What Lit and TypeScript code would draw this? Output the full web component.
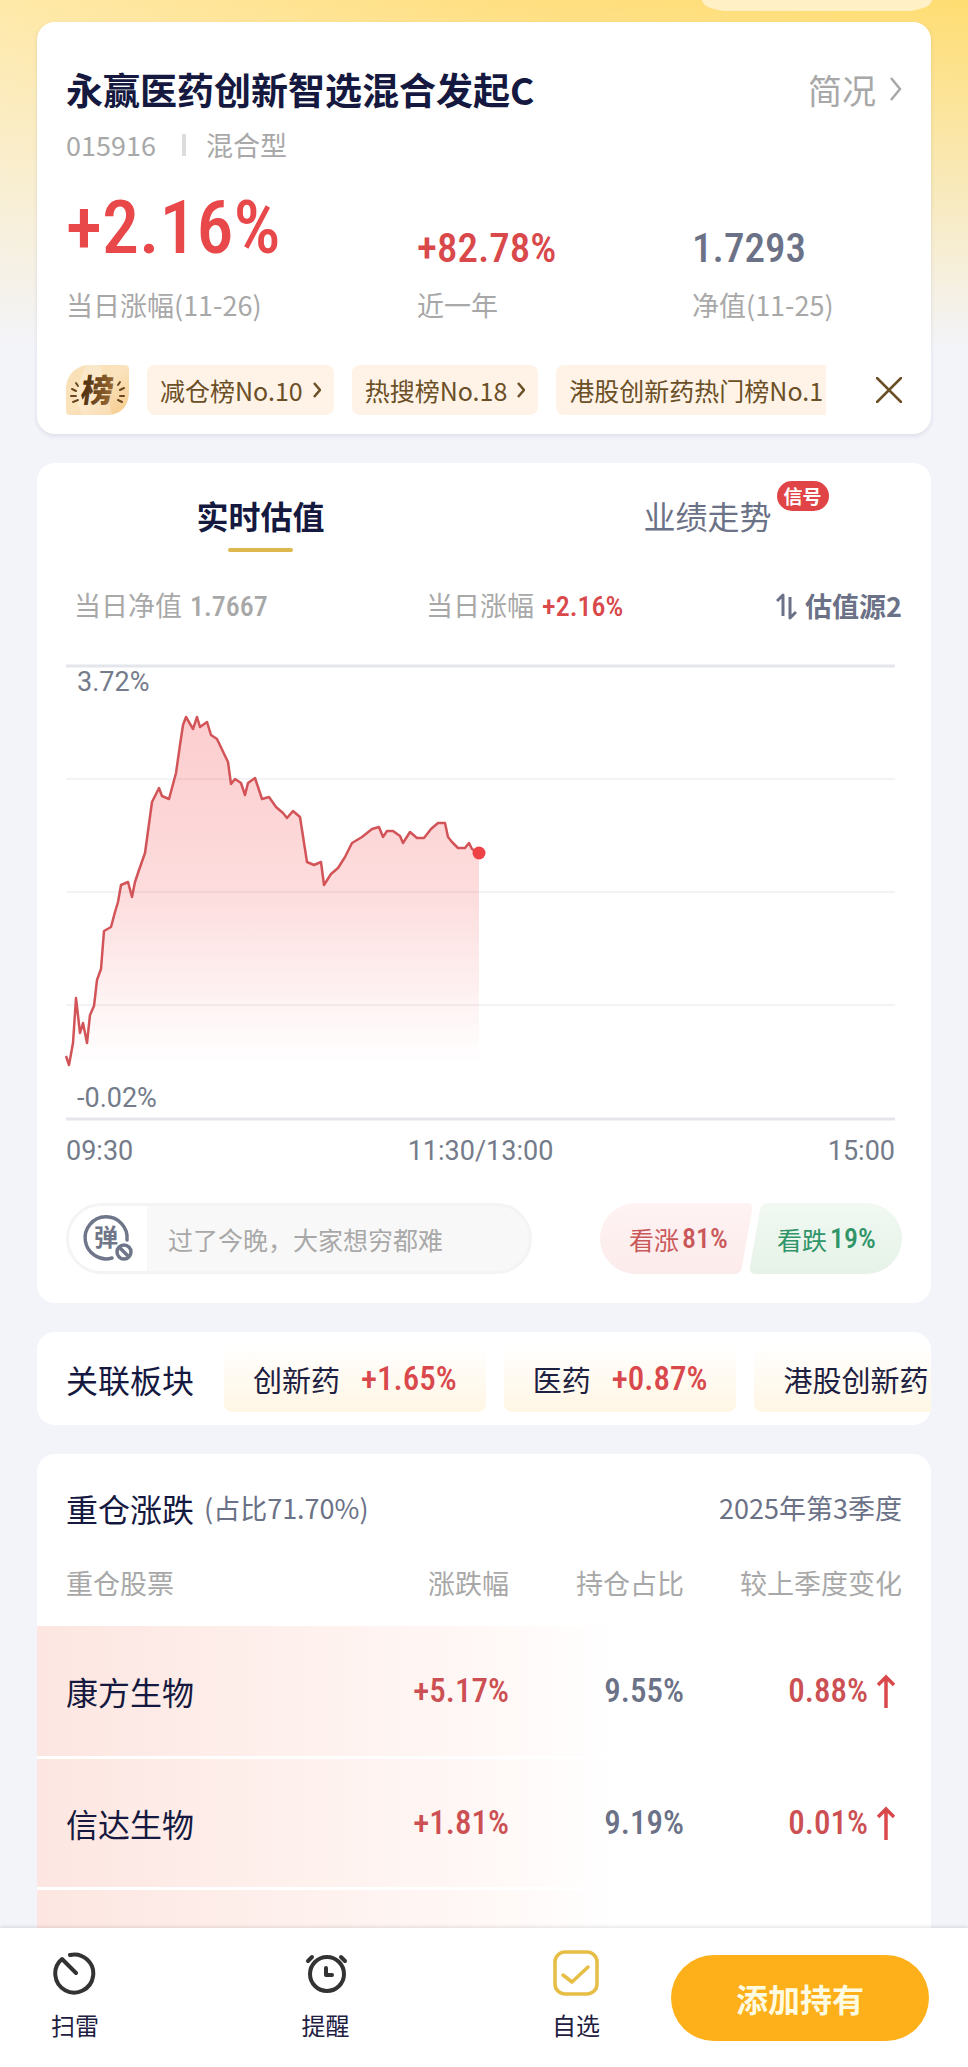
import { LitElement, html, css, svg } from "lit";
import { customElement } from "lit/decorators.js";

const LINE: [number, number][] = [
  [0, 392], [3, 401], [7, 379], [10, 334], [14, 369], [17, 359], [21, 379], [24, 351], [28, 342], [31, 316],
  [35, 305], [38, 267], [45, 263], [49, 248], [52, 238], [55, 221], [62, 218], [66, 233], [69, 218], [73, 206],
  [79, 189], [86, 138], [93, 124], [96, 132], [103, 135], [110, 109], [114, 81], [117, 61], [120, 53], [127, 65],
  [131, 53], [134, 63], [141, 58], [145, 71], [151, 75], [162, 98], [165, 120], [169, 115], [175, 119], [179, 131],
  [182, 119], [189, 114], [196, 135], [203, 133], [210, 143], [217, 149], [221, 154], [227, 147], [234, 153],
  [241, 198], [248, 201], [255, 198], [258, 221], [265, 210], [272, 204], [279, 193], [286, 179], [296, 173],
  [306, 165], [313, 163], [317, 173], [321, 167], [327, 167], [334, 172], [337, 179], [344, 168], [351, 174],
  [358, 174], [365, 165], [372, 159], [379, 159], [382, 173], [386, 178], [392, 184], [399, 184], [403, 179],
  [406, 185], [413, 189],
];

const RANKS = ["减仓榜No.10", "热搜榜No.18", "港股创新药热门榜No.1"];

const SECTORS = [
  { name: "创新药", change: "+1.65%" },
  { name: "医药", change: "+0.87%" },
  { name: "港股创新药", change: "" },
];

const HOLDINGS = [
  { name: "康方生物", change: "+5.17%", share: "9.55%", delta: "0.88%" },
  { name: "信达生物", change: "+1.81%", share: "9.19%", delta: "0.01%" },
];

const shared = css`
  * { box-sizing: border-box; }
  button, input { font: inherit; color: inherit; background: none; border: 0; padding: 0; margin: 0; }
  a { color: inherit; text-decoration: none; }
  h1, h2, p, dl, dd, dt { margin: 0; font-weight: 400; }
  svg { display: block; }
  .num { font-family: "Roboto Condensed", "Liberation Sans Narrow", Roboto, sans-serif; font-weight: 500; }
  .up { color: #d9484b; }
  .card { background: #fff; border-radius: 18px; }
`;

@customElement("fund-summary")
class FundSummary extends LitElement {
  static styles = [shared, css`
    :host { display: block; }
    .card { padding: 39px 29px 19px; box-shadow: 0 2px 4px rgba(60, 60, 90, 0.12); }
    .head { display: flex; justify-content: space-between; align-items: center; height: 56px; }
    .title { font-size: 37px; line-height: 56px; font-weight: 700; color: #15193f; white-space: nowrap; }
    .brief { display: flex; align-items: center; gap: 14px; font-size: 34px; color: #a8a8a8; }
    .meta { display: flex; align-items: center; font-size: 27px; line-height: 40px; color: #a8a8a8; margin-top: 8px; }
    .bar { width: 4px; height: 22px; background: #dcdcdc; margin: 0 20px 0 26px; }
    .stats { display: grid; grid-template-columns: 351fr 275fr 210fr; align-items: end; margin-top: 21px; }
    .stat { display: flex; flex-direction: column-reverse; gap: 9px; }
    .stat dt { font-size: 27px; line-height: 40px; color: #a8a8a8; white-space: nowrap; }
    .stat dd { font-size: 41px; line-height: 56px; }
    .stat .big { font-size: 74px; line-height: 84px; padding-bottom: 6px; color: #e8484a; }
    .nav { color: #6b7186; }
    .ranks { display: flex; align-items: center; margin-top: 40px; height: 50px; }
    .badge { flex: none; margin-right: 18px; }
    .list { flex: 1; min-width: 0; display: flex; gap: 18px; overflow: hidden; margin-right: 50px; }
    .tag { flex: none; display: flex; align-items: center; gap: 10px; height: 50px; padding: 0 13px; border-radius: 8px;
      background: #fef3e6; color: #6b4f27; font-size: 25px; white-space: nowrap; }
    .close { flex: none; width: 26px; height: 26px; }
  `];

  render() {
    return html`
      <section class="card">
        <div class="head">
          <h1 class="title">永赢医药创新智选混合发起C</h1>
          <a class="brief" href="#brief">简况
            <svg width="12" height="26" viewBox="0 0 12 26" fill="none" stroke="#a8a8a8" stroke-width="2.5"><path d="M1 2l9 11-9 11" /></svg>
          </a>
        </div>
        <div class="meta"><span>015916</span><span class="bar"></span><span>混合型</span></div>
        <dl class="stats">
          <div class="stat"><dt>当日涨幅(11-26)</dt><dd class="num big">+2.16%</dd></div>
          <div class="stat"><dt>近一年</dt><dd class="num up">+82.78%</dd></div>
          <div class="stat"><dt>净值(11-25)</dt><dd class="num nav">1.7293</dd></div>
        </dl>
        <div class="ranks">
          <svg class="badge" width="63" height="50" viewBox="0 0 63 50">
            <defs>
              <linearGradient id="gold" x1="0" y1="0" x2="1" y2="1"><stop offset="0" stop-color="#f9dfb4" /><stop offset=".5" stop-color="#fbe3bd" /><stop offset="1" stop-color="#f5c988" /></linearGradient>
              <linearGradient id="ink" x1="0" y1="0" x2="1" y2="0"><stop offset="0" stop-color="#4a2d10" /><stop offset="1" stop-color="#9a6a32" /></linearGradient>
            </defs>
            <path fill="url(#gold)" d="M20 0H59Q63 0 63 4V26C63 42 54 50 40 50H4Q0 50 0 46V22Q2 4 20 0Z" />
            <path fill="#fff" opacity=".25" d="M20 0H34L46 50H16L8 30Z" />
            <g transform="skewX(-8)"><text x="19" y="37" font-family="Noto Sans CJK SC, sans-serif" font-weight="900" font-size="32" fill="url(#ink)">榜</text></g>
            <path stroke="#6b4820" stroke-width="2" stroke-linecap="round" d="M10 18l2 3M6 24l4 2M5 31l5 0M7 37l5-2M52 20l2-3M54 25l4-2M54 31l4 0M52 35l4 2" />
          </svg>
          <div class="list">
            ${RANKS.map((t) => html`<button class="tag">${t}<svg width="8" height="16" viewBox="0 0 8 16" fill="none" stroke="#6b4f27" stroke-width="2.5"><path d="M1 1l6 7-6 7" /></svg></button>`)}
          </div>
          <button class="close" aria-label="关闭">
            <svg width="26" height="26" viewBox="0 0 26 26" stroke="#6b4f27" stroke-width="2.5" stroke-linecap="round"><path d="M1 1l24 24M25 1L1 25" /></svg>
          </button>
        </div>
      </section>`;
  }
}

@customElement("fund-estimate")
class FundEstimate extends LitElement {
  static styles = [shared, css`
    :host { display: block; }
    .card { padding: 24px 29px 29px; }
    .tabs { display: grid; grid-template-columns: 1fr 1fr; margin: 0 -29px; }
    .tab { justify-self: center; position: relative; font-size: 32px; line-height: 56px; color: #6b7186; padding-bottom: 9px; }
    .tab.on { font-weight: 700; color: #15193f; }
    .tab.on::after { content: ""; display: block; width: 65px; height: 4px; border-radius: 2px; background: #dcb84e; margin: 5px auto -9px; }
    .dot { position: absolute; left: calc(100% + 5px); top: -6px; height: 30px; padding: 0 7px; border-radius: 16px; background: #e04446;
      color: #fff; font-size: 19px; line-height: 30px; font-weight: 700; white-space: nowrap; }
    .info { display: grid; grid-template-columns: 352fr 476fr; align-items: center; margin-top: 33px; padding-left: 8px; font-size: 27px; line-height: 40px; color: #a8a8a8; }
    .info .num { font-size: 28px; margin-left: 2px; }
    .side { display: flex; justify-content: space-between; }
    .source { display: flex; align-items: center; gap: 8px; font-weight: 700; color: #6b7186; }
    .chart { position: relative; margin: 37px 7px 0 0; }
    .chart svg { width: 100%; height: auto; overflow: visible; }
    .y { position: absolute; left: 11px; font: 27px/32px Roboto, sans-serif; color: #747b8a; }
    .y.hi { top: 2px; }
    .y.lo { bottom: 7px; }
    .times { display: flex; justify-content: space-between; margin: 14px 7px 0 0; font: 27px/32px Roboto, sans-serif; color: #747b8a; }
    .foot { display: flex; justify-content: space-between; margin-top: 36px; height: 71px; }
    .say { display: flex; width: 466px; border: 3px solid #f4f4f4; border-radius: 36px; overflow: hidden; background: #f8f8f8; }
    .mute { flex: none; width: 78px; background: #fff; padding-left: 13px; }
    .field { flex: 1; min-width: 0; padding-left: 21px; font-size: 25px; outline: 0; }
    .field::placeholder { color: #a8a8a8; opacity: 1; }
    .votes { display: flex; }
    .vote { position: relative; z-index: 0; width: 154px; display: flex; align-items: center; gap: 3px; overflow: hidden; font-size: 25px; white-space: nowrap; }
    .vote .num { font-size: 28px; }
    .vote::before { content: ""; position: absolute; z-index: -1; top: 0; bottom: 0; transform: skewX(-10deg); border-radius: 6px; }
    .rise { border-radius: 36px 0 0 36px; padding-left: 29px; color: #c9585a; }
    .rise::before { left: -40px; right: 7px; background: linear-gradient(#fff3f3, #fcebeb); }
    .fall { border-radius: 0 36px 36px 0; padding-left: 29px; margin-left: -6px; color: #2f9468; }
    .fall::before { right: -40px; left: 7px; background: linear-gradient(#f1f9f2, #e6f2e8); }
  `];

  render() {
    const pts = LINE.map((p) => p.join(",")).join(" ");
    return html`
      <section class="card">
        <div class="tabs" role="tablist">
          <button class="tab on" role="tab" aria-selected="true">实时估值</button>
          <button class="tab" role="tab" aria-selected="false">业绩走势<span class="dot">信号</span></button>
        </div>
        <div class="info">
          <span>当日净值 <span class="num">1.7667</span></span>
          <div class="side">
            <span>当日涨幅 <span class="num up">+2.16%</span></span>
            <button class="source">
              <svg width="21" height="27" viewBox="0 0 21 27" fill="none" stroke="#6b7186" stroke-width="3" stroke-linejoin="round"><path d="M1 8L7 2V23M14 4V25L20 19" /></svg>
              估值源2
            </button>
          </div>
        </div>
        <div class="chart">
          <svg viewBox="0 0 829 457" role="img" aria-label="实时估值走势">
            <defs><linearGradient id="fade" x1="0" y1="53" x2="0" y2="399" gradientUnits="userSpaceOnUse"><stop offset="0" stop-color="#f5474b" stop-opacity=".27" /><stop offset=".5" stop-color="#f5474b" stop-opacity=".19" /><stop offset="1" stop-color="#f5474b" stop-opacity="0" /></linearGradient></defs>
            ${[115, 228, 341].map((y) => svg`<path d="M0 ${y}H829" stroke="#f2f3f5" stroke-width="2" />`)}
            ${[2, 455].map((y) => svg`<path d="M0 ${y}H829" stroke="#e4e6eb" stroke-width="3" />`)}
            <polygon points="${pts} 413,399 0,399" fill="url(#fade)" />
            <polyline points=${pts} fill="none" stroke="#d25458" stroke-width="2.5" stroke-linejoin="round" />
            <circle cx="413" cy="189" r="6.5" fill="#ee4246" />
          </svg>
          <span class="y hi">3.72%</span>
          <span class="y lo">-0.02%</span>
        </div>
        <div class="times"><span>09:30</span><span>11:30/13:00</span><span>15:00</span></div>
        <div class="foot">
          <div class="say">
            <button class="mute" aria-label="弹幕">
              <svg width="52" height="65" viewBox="0 0 52 65" fill="none" stroke="#6f7689" stroke-width="3.5">
                <path d="M45 34A21 21 0 1 0 30 52" stroke-linecap="round" />
                <text x="12" y="40" font-family="Noto Sans CJK SC, sans-serif" font-weight="700" font-size="24" fill="#6f7689" stroke="none">弹</text>
                <circle cx="42" cy="46" r="10" fill="#fff" stroke="none" />
                <circle cx="42" cy="46" r="7" /><path d="M37 41l10 10" />
              </svg>
            </button>
            <input class="field" aria-label="弹幕内容" placeholder="过了今晚，大家想穷都难" />
          </div>
          <div class="votes">
            <button class="vote rise">看涨<span class="num">81%</span></button>
            <button class="vote fall">看跌<span class="num">19%</span></button>
          </div>
        </div>
      </section>`;
  }
}

@customElement("fund-sectors")
class FundSectors extends LitElement {
  static styles = [shared, css`
    :host { display: block; }
    .card { display: flex; align-items: center; height: 93px; padding-left: 29px; overflow: hidden; white-space: nowrap; }
    .name { flex: none; font-size: 32px; color: #15193f; margin-right: 30px; }
    .chip { flex: none; display: flex; align-items: center; gap: 21px; height: 67px; padding: 0 29px; margin-right: 18px; border-radius: 8px;
      background: linear-gradient(#fff, #fff6e4); font-size: 29px; color: #1d2040; }
    .chip .num { font-size: 33px; }
  `];

  render() {
    return html`
      <section class="card">
        <h2 class="name">关联板块</h2>
        ${SECTORS.map((s) => html`<button class="chip">${s.name}${s.change ? html`<span class="num up">${s.change}</span>` : ""}</button>`)}
      </section>`;
  }
}

@customElement("fund-holdings")
class FundHoldings extends LitElement {
  static styles = [shared, css`
    :host { display: block; }
    .card { padding-top: 27px; }
    .head { display: flex; align-items: center; padding: 0 29px; line-height: 54px; font-size: 27px; color: #6b7186; }
    .head h2 { font-size: 32px; color: #15193f; margin-right: 10px; }
    .term { margin-left: auto; }
    .table { width: 100%; table-layout: fixed; border-collapse: collapse; margin-top: 4px; }
    .table th { height: 87px; font-size: 27px; font-weight: 400; color: #a8a8a8; text-align: right; padding: 0; white-space: nowrap; }
    .table td { height: 131px; text-align: right; padding: 0; font-size: 33px; color: #6b7186; border-bottom: 3px solid #fff; }
    .table .first { text-align: left; padding-left: 29px; }
    .table td.first { font-size: 32px; color: #15193f; }
    .table .last { padding-right: 29px; }
    .table .up { color: #cc5053; }
    .row { background: linear-gradient(90deg, #fde6e1, #fff8f6 50%, #fff 65%); }
    .c2 { width: 200px; } .c3 { width: 175px; } .c4 { width: 247px; }
    .delta { display: flex; justify-content: flex-end; align-items: center; gap: 9px; padding-right: 7px; }
  `];

  render() {
    return html`
      <section class="card">
        <div class="head"><h2>重仓涨跌</h2><span>(占比71.70%)</span><span class="term">2025年第3季度</span></div>
        <table class="table">
          <colgroup><col /><col class="c2" /><col class="c3" /><col class="c4" /></colgroup>
          <thead><tr><th class="first">重仓股票</th><th>涨跌幅</th><th>持仓占比</th><th class="last">较上季度变化</th></tr></thead>
          <tbody>
            ${HOLDINGS.map((h) => html`<tr class="row">
              <td class="first">${h.name}</td>
              <td class="num up">${h.change}</td>
              <td class="num">${h.share}</td>
              <td class="num up last"><div class="delta">${h.delta}<svg width="18" height="34" viewBox="0 0 18 34" fill="none" stroke="#d9484b" stroke-width="3.5"><path d="M9 34V3M1 11L9 3L17 11" /></svg></div></td>
            </tr>`)}
            <tr class="row"><td class="first"></td><td></td><td></td><td class="last"></td></tr>
          </tbody>
        </table>
      </section>`;
  }
}

@customElement("fund-actions")
class FundActions extends LitElement {
  static styles = [shared, css`
    :host { display: block; }
    .bar { display: flex; height: 139px; padding: 0 39px 0 51px; background: #fff; box-shadow: 0 -1px 4px rgba(0, 0, 0, 0.12); }
    .items { display: flex; justify-content: space-between; flex: 1; margin-right: 71px; }
    .item { display: flex; flex-direction: column; align-items: center; gap: 11px; padding-top: 22px; font-size: 24px; line-height: 36px; color: #1d2040; }
    .add { flex: none; margin-top: 27px; width: 258px; height: 86px; border-radius: 43px; background: #fdb019; color: #fffbe0; font-size: 32px; font-weight: 700; }
  `];

  render() {
    return html`
      <nav class="bar">
        <div class="items">
          <button class="item">
            <svg width="46" height="46" viewBox="0 0 46 46" fill="none" stroke="#333" stroke-width="4" stroke-linecap="round" stroke-linejoin="round"><path d="M18 5A19 19 0 1 1 10 9L24 23" /></svg>
            扫雷
          </button>
          <button class="item">
            <svg width="46" height="46" viewBox="0 0 46 46" fill="none" stroke="#333" stroke-width="4" stroke-linecap="round" stroke-linejoin="round"><circle cx="24" cy="24" r="17" /><path d="M23 18v7h6M5 11l4-4M42 11l-4-4" /></svg>
            提醒
          </button>
          <button class="item">
            <svg width="46" height="46" viewBox="0 0 46 46" fill="none" stroke="#e6bd45" stroke-width="3.5" stroke-linecap="round" stroke-linejoin="round"><rect x="2" y="2" width="42" height="42" rx="10" /><path d="M10 25l9 7L35 17" /></svg>
            自选
          </button>
        </div>
        <button class="add">添加持有</button>
      </nav>`;
  }
}

@customElement("app-root")
class AppRoot extends LitElement {
  static styles = css`
    :host { display: flex; flex-direction: column; height: 100vh; overflow: hidden; background: #f3f4fa; font-family: "Noto Sans CJK SC", sans-serif; }
    .page { flex: 1; min-height: 0; overflow: hidden; padding: 0 37px; display: flex; flex-direction: column; gap: 29px;
      background: linear-gradient(rgba(243, 244, 250, 0), #f3f4fa) 0 0 / 100% 350px no-repeat, linear-gradient(100deg, #ffe9a8, #ffdf80 50%, #ffdd70) 0 0 / 100% 350px no-repeat; }
    .page > * { flex: none; }
    .pill { align-self: flex-end; width: 230px; height: 11px; margin: 0 -1px -18px 0; background: #fff0c6; border-radius: 0 0 28px 28px / 0 0 11px 11px; }
    .actions { position: relative; flex: none; }
  `;

  render() {
    return html`
      <main class="page">
        <div class="pill"></div>
        <fund-summary></fund-summary>
        <fund-estimate></fund-estimate>
        <fund-sectors></fund-sectors>
        <fund-holdings></fund-holdings>
      </main>
      <fund-actions class="actions"></fund-actions>`;
  }
}
